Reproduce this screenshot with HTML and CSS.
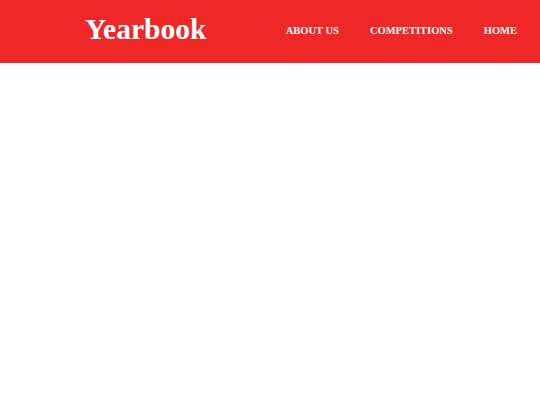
FILE: index.html
```html
<!DOCTYPE html>
<html>
<head>
<meta charset="utf-8">
<link rel="stylesheet" href="styles.css">
</head>
<body>
<header class="site-header">
  <h1 class="brand">Yearbook</h1>
  <nav class="nav">
    <a class="nav-link" href="#">ABOUT US</a>
    <a class="nav-link" href="#">COMPETITIONS</a>
    <a class="nav-link" href="#">HOME</a>
  </nav>
</header>
</body>
</html>
```
FILE: styles.css
```css
html, body {
  margin: 0;
  padding: 0;
  background: #ffffff;
  font-family: "Liberation Serif", "Times New Roman", serif;
}
.site-header {
  display: flex;
  align-items: center;
  height: 63px;
  background: #ee2827;
  padding: 0 23px 0 85px;
  box-sizing: border-box;
}
.brand {
  margin: 0;
  color: #ffffff;
  font-size: 29.5px;
  font-weight: bold;
  line-height: 1;
  position: relative;
  top: -2px;
}
.nav {
  margin-left: auto;
  display: flex;
  gap: 31px;
}
.nav-link {
  color: #ffffff;
  text-decoration: none;
  font-size: 10.5px;
  font-weight: bold;
  line-height: 1;
}
```
